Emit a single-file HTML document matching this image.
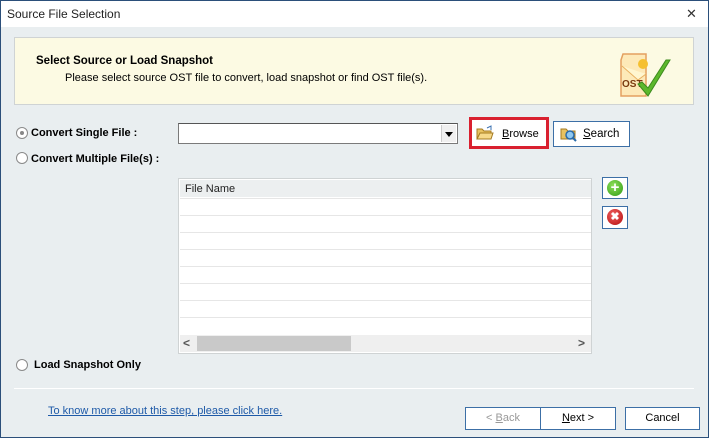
<!DOCTYPE html>
<html><head><style>
*{margin:0;padding:0;box-sizing:border-box}
body{width:709px;height:438px;overflow:hidden;font-family:"Liberation Sans",sans-serif;font-size:11px;color:#000;position:relative;background:#e9eef0}
.a{position:absolute}
.win{left:0;top:0;width:709px;height:438px;border:1px solid #2b4f7a}
.title{left:1px;top:1px;width:707px;height:26px;background:#fff}
.radio{width:12px;height:12px;border:1px solid #8a8a8a;border-radius:50%;background:#fff}
.lbl{font-weight:bold;font-size:11px}
.btn{background:#fff;border:1px solid #3c6fa6;font-size:11px;text-align:center}
.row{left:180px;width:411px;height:1px;background:#e6e6e6}
</style></head><body>
<div class="a win"></div>
<div class="a title"></div>
<div class="a" style="left:7px;top:7px;font-size:12px;color:#222">Source File Selection</div>
<div class="a" style="left:686px;top:6px;font-size:13px;color:#333">✕</div>

<div class="a" style="left:14px;top:37px;width:680px;height:68px;background:#fcfae3;border:1px solid #cfd3d4"></div>
<div class="a" style="left:36px;top:55px;font-weight:bold;font-size:11.5px">Select Source or Load Snapshot</div>
<div class="a" style="left:65px;top:72px;font-size:11px">Please select source OST file to convert, load snapshot or find OST file(s).</div>
<svg class="a" style="left:618px;top:52px" width="64" height="48" viewBox="0 0 64 48">
<path d="M5 2 H28 V44 H3 V8 Z" fill="#fde9b8" stroke="#e3a060" stroke-width="1.5"/>
<path d="M4 14 L20 28 L28 22" fill="#fff6d0" stroke="#e8b060"/>
<circle cx="25" cy="12" r="5" fill="#f5c030"/>
<text x="4" y="35" font-family="Liberation Sans" font-weight="bold" font-size="10" fill="#7a3a10">OST</text>
<path d="M20 32 L30 44 L52 8 L48 8 L30 36 L24 30 Z" fill="#5cb82c" stroke="#3d8a1e"/>
</svg>

<div class="a radio" style="left:16px;top:127px"></div>
<div class="a" style="left:20px;top:131px;width:4px;height:4px;border-radius:50%;background:#888"></div>
<div class="a lbl" style="left:31px;top:127px">Convert Single File :</div>
<div class="a" style="left:178px;top:123px;width:280px;height:21px;background:#fff;border:1px solid #7a7a7a;border-top-color:#555"></div>
<div class="a" style="left:441px;top:125px;width:15px;height:17px;background:#f0f0f0;border-left:1px solid #ccc"></div>
<div class="a" style="left:445px;top:132px;width:0;height:0;border-left:4px solid transparent;border-right:4px solid transparent;border-top:5px solid #000"></div>

<div class="a" style="left:469px;top:117px;width:80px;height:32px;border:3px solid #d9202f;background:#fff"></div>
<svg class="a" style="left:476px;top:125px" width="18" height="16"><path d="M1 4 H6 L8 6 H15 V14 H1 Z" fill="#e8c260" stroke="#a47a20"/><path d="M1 14 L4 8 H17 L15 14 Z" fill="#f6d98a" stroke="#a47a20"/><path d="M11 3 L15 1 L15 5" fill="none" stroke="#3a70b0"/></svg>
<div class="a" style="left:502px;top:128px;font-size:11px"><u>B</u>rowse</div>
<div class="a btn" style="left:553px;top:121px;width:77px;height:26px"></div>
<svg class="a" style="left:560px;top:125px" width="18" height="17"><path d="M1 4 H6 L8 6 H15 V14 H1 Z" fill="#e8c260" stroke="#a47a20"/><circle cx="10" cy="10" r="4" fill="#8fc8f0" stroke="#2a6aa8" stroke-width="1.5"/><path d="M13 13 L16 16" stroke="#2a6aa8" stroke-width="2"/></svg>
<div class="a" style="left:583px;top:128px;font-size:11.5px"><u>S</u>earch</div>

<div class="a radio" style="left:16px;top:152px"></div>
<div class="a lbl" style="left:31px;top:153px">Convert Multiple File(s) :</div>

<div class="a" style="left:178px;top:178px;width:414px;height:176px;background:#fff;border:1px solid #cfd3d4"></div>
<div class="a" style="left:180px;top:180px;width:411px;height:17px;background:#eceff0"></div>
<div class="a" style="left:185px;top:183px;font-size:11px;color:#222">File Name</div>
<div class="a row" style="top:198px"></div>
<div class="a row" style="top:215px"></div>
<div class="a row" style="top:232px"></div>
<div class="a row" style="top:249px"></div>
<div class="a row" style="top:266px"></div>
<div class="a row" style="top:283px"></div>
<div class="a row" style="top:300px"></div>
<div class="a row" style="top:317px"></div>
<div class="a" style="left:180px;top:335px;width:411px;height:17px;background:#efefef"></div>
<div class="a" style="left:197px;top:336px;width:154px;height:15px;background:#c9c9c9"></div>
<div class="a" style="left:183px;top:336px;font-size:12px;color:#555;font-weight:bold">&lt;</div>
<div class="a" style="left:578px;top:336px;font-size:12px;color:#555;font-weight:bold">&gt;</div>

<div class="a btn" style="left:602px;top:177px;width:26px;height:22px"></div>
<div class="a" style="left:607px;top:180px;width:16px;height:16px;border-radius:50%;background:radial-gradient(circle at 40% 35%,#8ee05a,#2f9a14);color:#fff;font-weight:bold;font-size:15px;line-height:16px;text-align:center">+</div>
<div class="a btn" style="left:602px;top:206px;width:26px;height:23px"></div>
<div class="a" style="left:607px;top:209px;width:16px;height:16px;border-radius:50%;background:radial-gradient(circle at 40% 35%,#f06060,#b40d0d);color:#fff;font-weight:bold;font-size:11px;line-height:16px;text-align:center">✖</div>

<div class="a radio" style="left:16px;top:359px"></div>
<div class="a lbl" style="left:34px;top:359px">Load Snapshot Only</div>
<div class="a" style="left:14px;top:388px;width:680px;height:1px;background:#fff"></div>

<div class="a" style="left:48px;top:405px;font-size:11px;color:#1e5aa8;text-decoration:underline">To know more about this step, please click here.</div>
<div class="a btn" style="left:465px;top:407px;width:76px;height:23px;line-height:21px;color:#999">&lt; <u>B</u>ack</div>
<div class="a btn" style="left:540px;top:407px;width:76px;height:23px;line-height:21px"><u>N</u>ext &gt;</div>
<div class="a btn" style="left:625px;top:407px;width:75px;height:23px;line-height:21px">Cancel</div>
</body></html>
